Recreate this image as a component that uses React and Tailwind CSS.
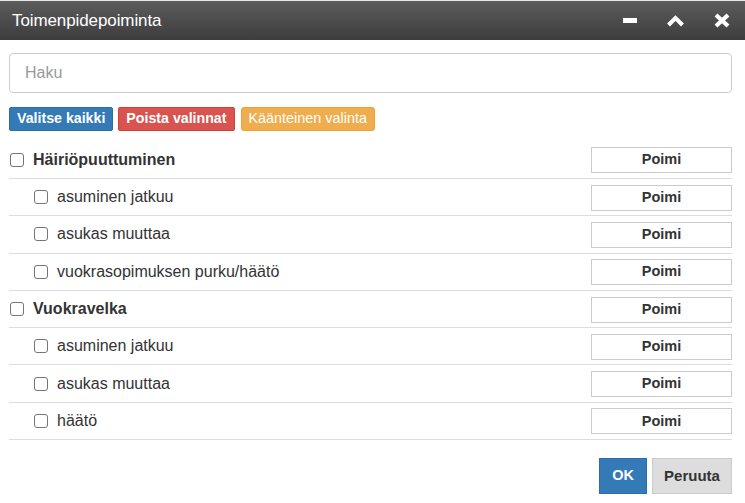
import React from 'react';

const groups = [
  { name: 'Häiriöpuuttuminen', items: ['asuminen jatkuu', 'asukas muuttaa', 'vuokrasopimuksen purku/häätö'] },
  { name: 'Vuokravelka', items: ['asuminen jatkuu', 'asukas muuttaa', 'häätö'] },
];

function Box() {
  return <span className="inline-block w-[14px] h-[14px] rounded-[3px] border border-[#767676] bg-white shrink-0" />;
}

function Row({ label, bold }) {
  return (
    <div className="flex items-center h-[37.3px] border-b border-[#dddddd]">
      <div className={`flex items-center flex-1 ${bold ? 'pl-[1px]' : 'pl-[25px]'}`}>
        <Box />
        <span className={`ml-[9px] text-[16px] text-[#333] ${bold ? 'font-bold' : ''}`}>{label}</span>
      </div>
      <button className="w-[141px] h-[26px] border border-[#cccccc] bg-white text-[14.5px] font-bold text-[#333] mt-[1px]">
        Poimi
      </button>
    </div>
  );
}

export default function App() {
  return (
    <div className="w-[745px] h-[503px] bg-white overflow-hidden" style={{ fontFamily: '"Liberation Sans", Arial, sans-serif' }}>
      <div className="h-px bg-[#e8e8e8]" />
      <div className="h-[39px] flex items-center bg-gradient-to-b from-[#5c5c5c] to-[#3d3d3d] pl-[12px] pr-[15px]">
        <span className="text-white text-[17px] flex-1 tracking-[-0.1px]">Toimenpidepoiminta</span>
        <svg width="15" height="6" viewBox="0 0 15 6" className="mr-[29px] mt-[1px]">
          <rect x="0" y="0" width="14" height="5" fill="#fff" />
        </svg>
        <svg width="17" height="12" viewBox="0 0 17 12" className="mr-[30px]">
          <path d="M1.5 10 L8.5 3 L15.5 10" stroke="#fff" strokeWidth="4" fill="none" />
        </svg>
        <svg width="16" height="15" viewBox="0 0 16 15">
          <path d="M2 2 L14 13 M14 2 L2 13" stroke="#fff" strokeWidth="4.2" fill="none" />
        </svg>
      </div>

      <div className="px-[9px] pr-[13px] pt-[13px]">
        <div className="h-[40px] rounded-[4px] border border-[#cccccc] flex items-center pl-[15px] text-[16px] text-[#999]">
          Haku
        </div>

        <div className="flex gap-[5px] mt-[14px]">
          <button className="h-[24px] px-[7px] bg-[#337ab7] border border-[#2e6da4] text-white text-[14.2px] font-bold rounded-[2px]">Valitse kaikki</button>
          <button className="h-[24px] px-[7px] bg-[#d9534f] border border-[#d43f3a] text-white text-[14.2px] font-bold rounded-[2px]">Poista valinnat</button>
          <button className="h-[24px] px-[7px] bg-[#f0ad4e] border border-[#eea236] text-white text-[14.4px] rounded-[3px] ml-[1px]">Käänteinen valinta</button>
        </div>

        <div className="mt-[10.7px]">
          {groups.map((g) => (
            <React.Fragment key={g.name}>
              <Row label={g.name} bold />
              {g.items.map((it) => (
                <Row key={it} label={it} />
              ))}
            </React.Fragment>
          ))}
        </div>

        <div className="flex justify-end gap-[5px] mt-[18px]">
          <button className="h-[36px] w-[48px] bg-[#337ab7] border border-[#2e6da4] text-white text-[14.5px] font-bold">OK</button>
          <button className="h-[36px] w-[80px] bg-[#dddddd] border border-[#cccccc] text-[#333] text-[15px] font-bold">Peruuta</button>
        </div>
      </div>
    </div>
  );
}
